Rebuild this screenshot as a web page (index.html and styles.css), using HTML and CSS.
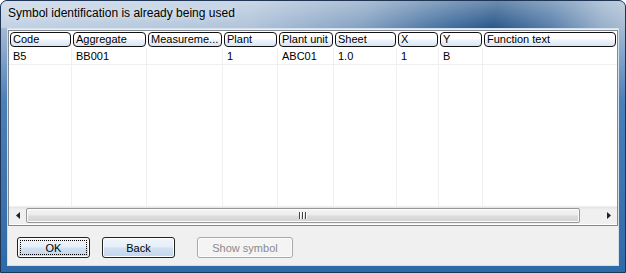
FILE: index.html
```html
<!DOCTYPE html>
<html lang="en">
<head>
    <meta charset="UTF-8">
    <title>Symbol identification is already being used</title>
    <link rel="stylesheet" href="styles.css">
</head>
<body>

    <div class="window">
        <div class="titlebar">Symbol identification is already being used</div>
        <div class="frame">
            <div class="client">
                <div class="list">
                    <div class="grid">
                        <div class="head"><span>Code</span></div>
                        <div class="head"><span>Aggregate</span></div>
                        <div class="head"><span>Measureme...</span></div>
                        <div class="head"><span>Plant</span></div>
                        <div class="head"><span>Plant unit</span></div>
                        <div class="head"><span>Sheet</span></div>
                        <div class="head"><span>X</span></div>
                        <div class="head"><span>Y</span></div>
                        <div class="head last"><span>Function text</span></div>

                        <div class="cell">B5</div>
                        <div class="cell">BB001</div>
                        <div class="cell"></div>
                        <div class="cell">1</div>
                        <div class="cell">ABC01</div>
                        <div class="cell">1.0</div>
                        <div class="cell">1</div>
                        <div class="cell">B</div>
                        <div class="cell last"></div>

                        <div class="fill"></div>
                        <div class="fill"></div>
                        <div class="fill"></div>
                        <div class="fill"></div>
                        <div class="fill"></div>
                        <div class="fill"></div>
                        <div class="fill"></div>
                        <div class="fill"></div>
                        <div class="fill last"></div>
                    </div>
                    <div class="hscroll">
                        <div class="arrow">
                            <svg width="4" height="7" viewBox="0 0 4 7"><path d="M4 0 L0 3.5 L4 7 Z" fill="#222"/></svg>
                        </div>
                        <div class="thumb">
                            <span class="grip"></span><span class="grip"></span><span class="grip"></span>
                        </div>
                        <div class="track"></div>
                        <div class="arrow">
                            <svg width="4" height="7" viewBox="0 0 4 7"><path d="M0 0 L4 3.5 L0 7 Z" fill="#222"/></svg>
                        </div>
                    </div>
                </div>
                <div class="buttons">
                    <button class="btn default"><span class="focus">OK</span></button>
                    <button class="btn">Back</button>
                    <button class="btn wide" disabled>Show symbol</button>
                </div>
            </div>
        </div>
    </div>

</body>
</html>
```

FILE: styles.css
```css
body {
    margin: 0;
    font-family: "Liberation Sans", Arial, sans-serif;
    font-size: 11px;
    background: #ffffff;
}
.window {
    width: 626px;
    height: 273px;
    box-sizing: border-box;
    border: 1px solid #1f3553;
    border-radius: 7px 7px 0 0;
    display: flex;
    flex-direction: column;
    overflow: hidden;
    background-color: #2c67a6;
}
.titlebar {
    height: 27px;
    flex: none;
    padding-left: 7px;
    line-height: 25px;
    font-size: 12px;
    color: #000;
    text-shadow: 0 0 6px rgba(255, 255, 255, 0.8);
    white-space: nowrap;
    background:
        linear-gradient(to bottom, rgba(255, 255, 255, 0.3), rgba(255, 255, 255, 0) 26px),
        linear-gradient(100deg, #c3d3e5 0%, #b2c5db 40%, #86a3c3 58%, #45709f 72%, #2c5a8c 79%, #5a80ab 88%, #97afca 96%, #a9bcd3 100%);
}
.frame {
    flex: 1;
    display: flex;
    padding: 0 7px 7px 7px;
    background-color: #2f6aa8;
    background-image: linear-gradient(to bottom, #a4bad4 0%, #4a7fb8 30%, #2f6aa8 100%);
}
.client {
    flex: 1;
    background: #f0f0f0;
    border: 1px solid #d5dfea;
    margin: 0 -1px -1px -1px;
    display: flex;
    flex-direction: column;
}
.list {
    margin-top: 1px;
    height: 196px;
    box-sizing: border-box;
    border: 1px solid #828790;
    background: #ffffff;
    display: flex;
    flex-direction: column;
}
.grid {
    flex: 1;
    display: grid;
    grid-template-columns: 63px 75px 76px 55px 56px 63px 42px 44px 1fr;
    grid-template-rows: 17px 17px 1fr;
}
.head {
    padding: 1px;
}
.head span {
    display: block;
    height: 15px;
    box-sizing: border-box;
    border: 1px solid #111;
    border-radius: 4px;
    padding-left: 2px;
    line-height: 13px;
    white-space: nowrap;
    overflow: hidden;
    background: linear-gradient(#ffffff 0%, #ffffff 45%, #eef3fa 55%, #d9e5f3 100%);
}
.cell {
    border-right: 1px solid #f0f0f0;
    border-bottom: 1px solid #f0f0f0;
    padding-left: 4px;
    line-height: 16px;
    white-space: nowrap;
}
.fill {
    border-right: 1px solid #f0f0f0;
    border-bottom: 1px solid #f0f0f0;
}
.cell.last, .fill.last {
    border-right: none;
}
.hscroll {
    height: 17px;
    display: flex;
    background: linear-gradient(#e3e3e3, #f0f0f0 3px, #f0f0f0);
    margin-bottom: 1px;
}
.arrow {
    width: 17px;
    display: flex;
    align-items: center;
    justify-content: center;
}
.thumb {
    width: 554px;
    margin: 1px 0;
    box-sizing: border-box;
    border: 1px solid #979797;
    border-radius: 2px;
    background: linear-gradient(#f4f4f4 0%, #ececec 45%, #dcdcdc 55%, #d3d3d3 100%);
    box-shadow: inset 0 0 0 1px #fbfbfb;
    display: flex;
    align-items: center;
    justify-content: center;
    gap: 1px;
}
.grip {
    width: 2px;
    height: 7px;
    background: linear-gradient(to right, #444 1px, #ffffff 1px);
}
.track {
    flex: 1;
}
.buttons {
    display: flex;
    padding: 11px 0 0 9px;
}
.btn {
    width: 73px;
    height: 21px;
    margin-right: 12px;
    padding: 0;
    font-family: "Liberation Sans", Arial, sans-serif;
    font-size: 11px;
    color: #000;
    border: 1px solid #222;
    border-radius: 3px;
    background: linear-gradient(#f0f5fb 0%, #e6eef8 48%, #d2e1f2 52%, #c2d6ee 100%);
    box-shadow: inset 0 0 0 1px #fbfdff;
    display: flex;
    align-items: center;
    justify-content: center;
}
.btn.default {
    padding: 2px;
}
.btn .focus {
    flex: 1;
    align-self: stretch;
    border: 1px dotted #000;
    display: flex;
    align-items: center;
    justify-content: center;
}
.btn.wide {
    width: 96px;
    margin-left: 10px;
}
.btn:disabled {
    color: #8a8a8a;
    border-color: #a9a9a9;
    background: #f4f4f4;
    box-shadow: inset 0 0 0 1px #fcfcfc;
}
```
